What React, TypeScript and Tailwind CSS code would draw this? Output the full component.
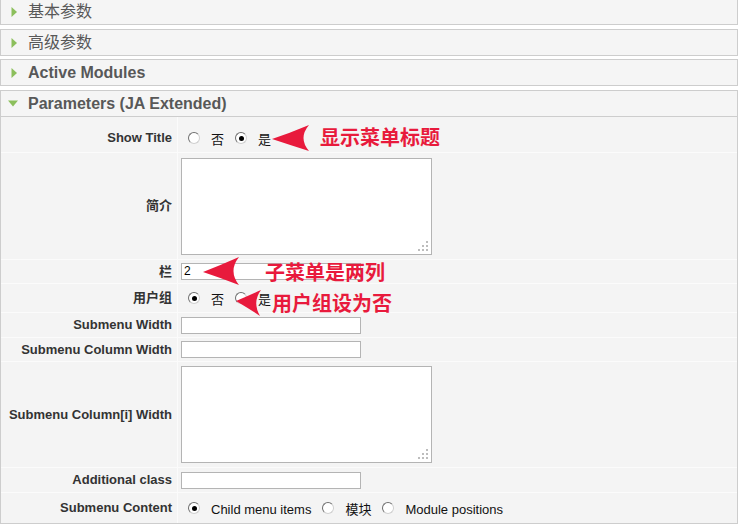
import React from "react";

const CJK = "font-['Liberation_Sans','Noto_Sans_CJK_SC',sans-serif]";

function Pane({ title, open, cjk, className }: { title: string; open?: boolean; cjk?: boolean; className?: string }) {
  return (
    <div
      className={`h-[27px] border border-[#cdcdcd] bg-[#f5f5f5] flex items-center ${open ? "pl-[7px] gap-[10px]" : "pl-[10px] gap-[11px]"} ${className ?? ""}`}
    >
      {open ? (
        <svg width="10" height="7" viewBox="0 0 10 7">
          <path d="M0 0.5 L10 0.5 L5 6.5 Z" fill="#8cbf5c" />
        </svg>
      ) : (
        <svg width="6" height="10" viewBox="0 0 6 10">
          <path d="M0.5 0 L6 5 L0.5 10 Z" fill="#8cbf5c" />
        </svg>
      )}
      <span className={`text-[16px] leading-none text-[#585858] ${cjk ? "font-normal" : "font-bold"}`}>{title}</span>
    </div>
  );
}

function Radio({ checked }: { checked?: boolean }) {
  return (
    <span className="w-[12px] h-[12px] rounded-full bg-white border border-[#6f6f6f] border-r-[#d0d0d0] border-b-[#d0d0d0] flex items-center justify-center shrink-0">
      {checked && <span className="w-[5px] h-[5px] rounded-full bg-black" />}
    </span>
  );
}

function Row({ label, h, children, last, labelPad }: { label: string; h: string; children?: React.ReactNode; last?: boolean; labelPad?: string }) {
  return (
    <div className={`grid grid-cols-[177px_1fr] ${h} ${last ? "" : "border-b border-[#fbfbfb]"}`}>
      <div
        className={`border-r border-[#fbfbfb] flex items-center justify-end pr-[5px] text-[13px] font-bold text-[#333] ${labelPad ?? ""}`}
      >
        {label}
      </div>
      <div className="flex items-center pl-[3px]">{children}</div>
    </div>
  );
}

function TextBox({ value }: { value?: string }) {
  return (
    <div className="w-[180px] h-[17px] bg-white border border-[#b4b4b4] text-[12px] leading-[15px] pl-[2px] text-black">
      {value}
    </div>
  );
}

function Area() {
  return (
    <div className="relative w-[251px] h-[97px] bg-white border border-[#b4b4b4]">
      <svg className="absolute right-[2px] bottom-[2px]" width="11" height="11" viewBox="0 0 11 11">
        <g fill="#bdbdbd">
          <rect x="8" y="0" width="2" height="2" />
          <rect x="4" y="4" width="2" height="2" />
          <rect x="8" y="4" width="2" height="2" />
          <rect x="0" y="8" width="2" height="2" />
          <rect x="4" y="8" width="2" height="2" />
          <rect x="8" y="8" width="2" height="2" />
        </g>
      </svg>
    </div>
  );
}

function RadioGroup({ items, checked }: { items: string[]; checked: number }) {
  return (
    <div className="flex items-center pl-[7px] text-[13px] text-[#111]">
      {items.map((t, i) => (
        <React.Fragment key={t}>
          <Radio checked={i === checked} />
          <span className="ml-[11px] mr-[11px] pt-[4px]">{t}</span>
        </React.Fragment>
      ))}
    </div>
  );
}

export default function App() {
  return (
    <div className={`relative w-[739px] h-[530px] overflow-hidden bg-white ${CJK}`}>
      <div className="w-[738px] -mt-[2px] flex flex-col">
        <Pane title="基本参数" cjk />
        <Pane title="高级参数" cjk className="mt-[4px]" />
        <Pane title="Active Modules" className="mt-[3px]" />
        <Pane title="Parameters (JA Extended)" open className="mt-[4px]" />

        <div className="border-x border-b border-[#cdcdcd] bg-[#f4f4f4]">
          <Row label="Show Title" h="h-[36px]" labelPad="pt-[7px]">
            <div className="pt-[7px]">
              <RadioGroup items={["否", "是"]} checked={1} />
            </div>
          </Row>
          <Row label="简介" h="h-[107px]">
            <Area />
          </Row>
          <Row label="栏" h="h-[24px]">
            <TextBox value="2" />
          </Row>
          <Row label="用户组" h="h-[29px]">
            <RadioGroup items={["否", "是"]} checked={0} />
          </Row>
          <Row label="Submenu Width" h="h-[25px]">
            <TextBox />
          </Row>
          <Row label="Submenu Column Width" h="h-[24px]">
            <TextBox />
          </Row>
          <Row label="Submenu Column[i] Width" h="h-[106px]">
            <Area />
          </Row>
          <Row label="Additional class" h="h-[25px]">
            <TextBox />
          </Row>
          <Row label="Submenu Content" h="h-[30px]" last>
            <RadioGroup items={["Child menu items", "模块", "Module positions"]} checked={0} />
          </Row>
        </div>
      </div>

      {/* annotations drawn over the form */}
      <svg className="absolute inset-0 pointer-events-none" width="739" height="530" viewBox="0 0 739 530">
        <g fill="#e81a3c">
          <path d="M272 139 Q290 133 309 125 Q298 138 309 151 Q290 145 272 139 Z" />
          <path d="M203 272 Q221 265 239 257 Q228 271 239 285 Q221 278 203 272 Z" />
          <path d="M236 301 Q248 296 261 290 Q252 302 260 316 Q248 308 236 301 Z" />
        </g>
      </svg>
      <span className="absolute left-[320px] top-[127px] text-[20px] leading-[20px] font-bold text-[#e81a3c] font-['Noto_Sans_CJK_SC',sans-serif]">
        显示菜单标题
      </span>
      <span className="absolute left-[265px] top-[262px] text-[20px] leading-[20px] font-bold text-[#e81a3c] font-['Noto_Sans_CJK_SC',sans-serif]">
        子菜单是两列
      </span>
      <span className="absolute left-[272px] top-[293px] text-[20px] leading-[20px] font-bold text-[#e81a3c] font-['Noto_Sans_CJK_SC',sans-serif]">
        用户组设为否
      </span>
    </div>
  );
}
